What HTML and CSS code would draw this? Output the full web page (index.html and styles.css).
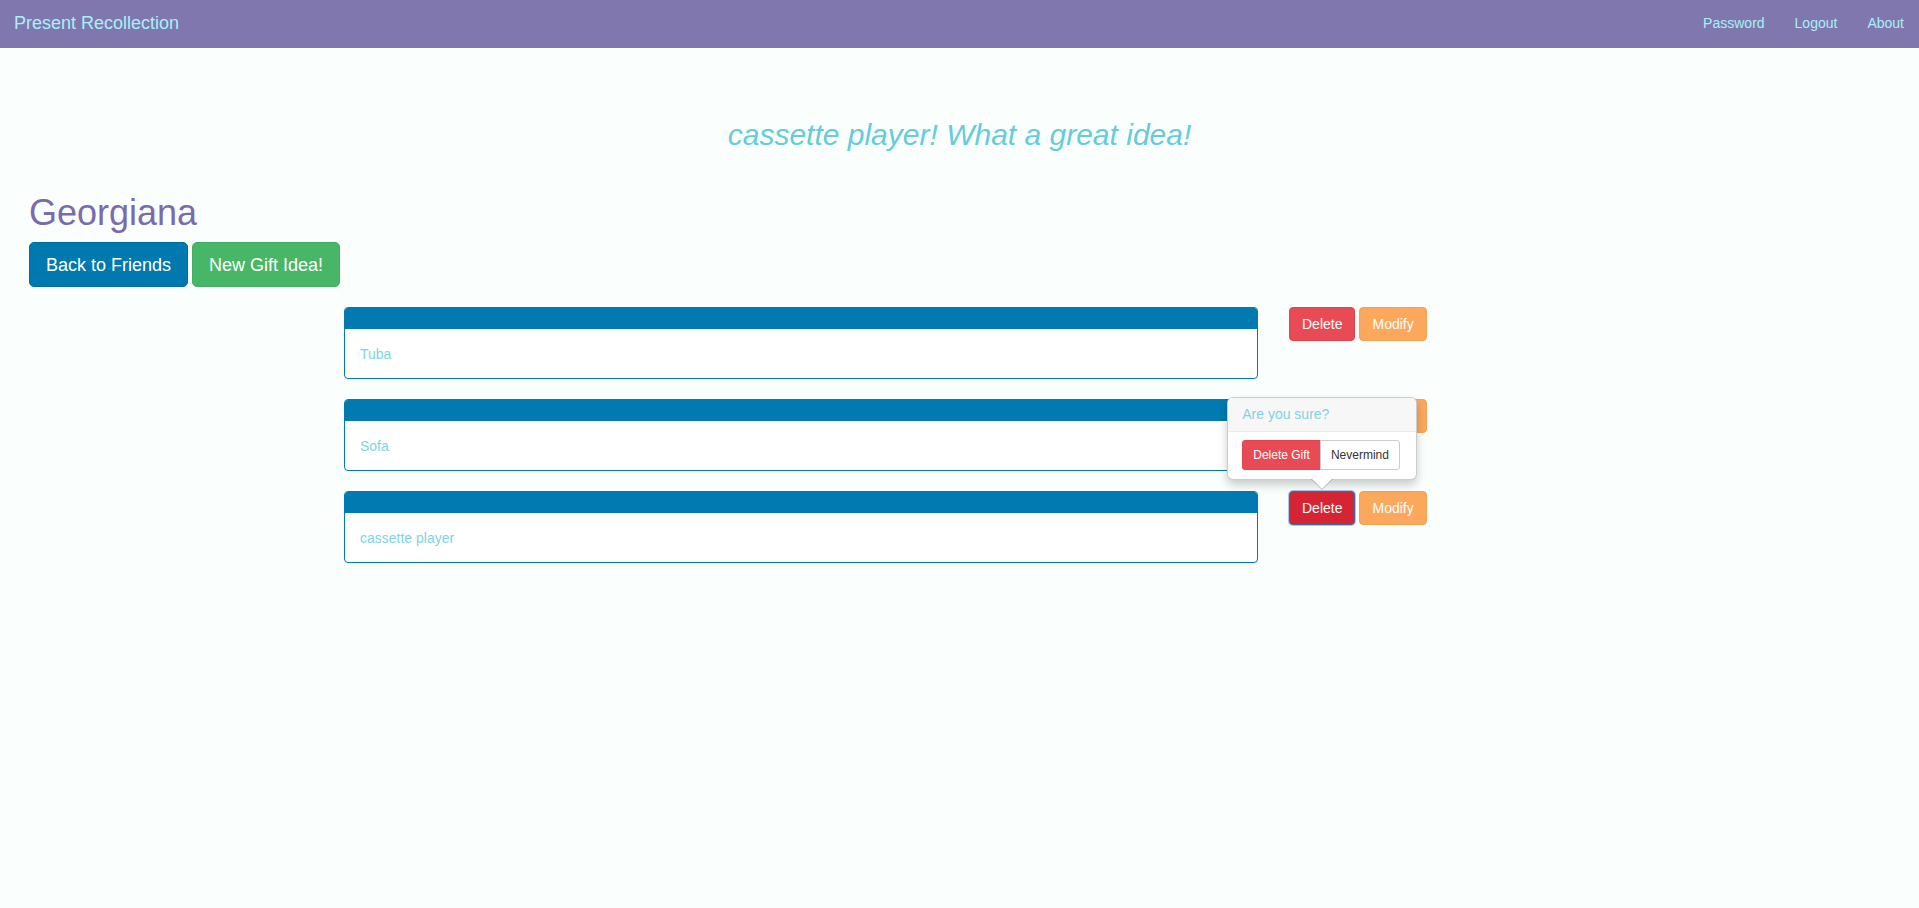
FILE: index.html
```html
<!DOCTYPE html>
<html lang="en">
<head>
<meta charset="utf-8">
<title>Present Recollection</title>
<link rel="stylesheet" href="styles.css">
</head>
<body>
<nav class="navbar">
  <a class="brand" href="#">Present Recollection</a>
  <ul class="nav-links">
    <li><a href="#">Password</a></li>
    <li><a href="#">Logout</a></li>
    <li><a href="#">About</a></li>
  </ul>
</nav>
<main class="page">
  <h2 class="idea-msg">cassette player! What a great idea!</h2>
  <h1 class="friend-name">Georgiana</h1>
  <div class="actions">
    <a class="btn-lg btn-blue" href="#">Back to Friends</a>
    <a class="btn-lg btn-green" href="#">New Gift Idea!</a>
  </div>
  <ul class="gift-list">
    <li class="gift-row">
      <div class="gift-card"><div class="gift-head"></div><div class="gift-body">Tuba</div></div>
      <div class="gift-actions">
        <span class="del-wrap"><button class="btn btn-red">Delete</button></span>
        <button class="btn btn-orange">Modify</button>
      </div>
    </li>
    <li class="gift-row">
      <div class="gift-card"><div class="gift-head"></div><div class="gift-body">Sofa</div></div>
      <div class="gift-actions">
        <span class="del-wrap"><button class="btn btn-red">Delete</button></span>
        <button class="btn btn-orange">Modify</button>
      </div>
    </li>
    <li class="gift-row">
      <div class="gift-card"><div class="gift-head"></div><div class="gift-body">cassette player</div></div>
      <div class="gift-actions">
        <span class="del-wrap">
          <button class="btn btn-red btn-active">Delete</button>
          <div class="popover">
            <div class="popover-title">Are you sure?</div>
            <div class="popover-content">
              <div class="btn-group">
                <button class="btn-sm btn-sm-red">Delete Gift</button><button class="btn-sm btn-sm-white">Nevermind</button>
              </div>
            </div>
            <span class="arrow"></span>
          </div>
        </span>
        <button class="btn btn-orange">Modify</button>
      </div>
    </li>
  </ul>
</main>
</body>
</html>
```

FILE: styles.css
```css
* { box-sizing: border-box; }
html, body { margin: 0; padding: 0; }
body {
  background: #fafffe;
  font-family: "Liberation Sans", Arial, sans-serif;
  font-size: 14px;
  line-height: 20px;
  color: #333;
}
a { text-decoration: none; }

.navbar {
  height: 48px;
  background: #8077ae;
  display: flex;
  align-items: center;
  justify-content: space-between;
  padding: 0 15px 2px 14px;
}
.brand {
  color: #a6f1f6;
  font-size: 18px;
  line-height: 20px;
}
.nav-links {
  list-style: none;
  margin: 0;
  padding: 0;
  display: flex;
}
.nav-links a {
  display: block;
  color: #a6f1f6;
  padding: 0 0 0 30px;
  font-size: 14px;
}

.page {
  padding: 0 29px;
}
.idea-msg {
  margin: 70px 0 0;
  text-align: center;
  font-style: italic;
  font-weight: normal;
  font-size: 30px;
  line-height: 33px;
  color: #66ccd8;
}
.friend-name {
  margin: 42px 0 9px;
  font-weight: normal;
  font-size: 36px;
  line-height: 40px;
  color: #7a6cac;
}
.actions {
  display: flex;
  gap: 4px;
  margin-bottom: 20px;
}
.btn-lg {
  display: inline-block;
  padding: 9.5px 16px;
  font-size: 18px;
  line-height: 24px;
  border-radius: 5px;
  border: 1px solid transparent;
  color: #fff;
}
.btn-blue { background: #0079ae; border-color: #006f9f; }
.btn-green { background: #47b767; border-color: #3fae5e; }

.gift-list {
  list-style: none;
  margin: 0 0 0 315px;
  padding: 0;
  display: flex;
  flex-direction: column;
  gap: 20px;
}
.gift-row {
  display: flex;
  align-items: flex-start;
  gap: 31px;
}
.gift-card {
  width: 914px;
  border: 1px solid #007ab0;
  border-radius: 4px;
  background: #fff;
  overflow: hidden;
}
.gift-head {
  height: 21px;
  background: #007ab0;
}
.gift-body {
  padding: 15px 15px;
  height: 49px;
  color: #7ed4df;
  font-size: 14px;
  line-height: 20px;
}
.gift-actions {
  display: flex;
  gap: 4px;
}
.del-wrap { position: relative; display: inline-block; }
.btn {
  display: inline-block;
  font-family: inherit;
  font-size: 14px;
  line-height: 20px;
  padding: 6px 12px;
  border-radius: 4px;
  border: 1px solid transparent;
  color: #fff;
  cursor: pointer;
  height: 34px;
}
.btn-red { background: #e84b55; border-color: #e2434d; }
.btn-orange { background: #fba85c; border-color: #f6a255; }
.btn-active {
  background: #d52535;
  border-color: #3d6aa0;
  box-shadow: 0 0 0 1px #9ccaf1;
}

.popover {
  position: absolute;
  bottom: calc(100% + 11px);
  left: 50%;
  margin-left: -95px;
  width: 190px;
  background: #fff;
  border: 1px solid rgba(0,0,0,0.2);
  border-radius: 6px;
  box-shadow: 0 5px 10px rgba(0,0,0,0.2);
  z-index: 10;
}
.popover-title {
  padding: 7px 14px;
  font-size: 14px;
  line-height: 19px;
  background: #f7f7f7;
  border-bottom: 1px solid #ebebeb;
  border-radius: 5px 5px 0 0;
  color: #7ed4df;
}
.popover-content {
  padding: 8px 14px 9px;
}
.btn-group { display: flex; }
.btn-sm {
  font-family: inherit;
  font-size: 12px;
  line-height: 18px;
  padding: 5px 10px;
  border: 1px solid transparent;
  height: 30px;
}
.btn-sm-red {
  background: #e84b55;
  border-color: #e2434d;
  color: #fff;
  border-radius: 3px 0 0 3px;
}
.btn-sm-white {
  background: #fff;
  border-color: #ccc;
  color: #333;
  border-radius: 0 3px 3px 0;
  margin-left: -1px;
}
.arrow,
.arrow::after {
  position: absolute;
  width: 0;
  height: 0;
  border-style: solid;
  border-color: transparent;
}
.arrow {
  left: 50%;
  margin-left: -11px;
  bottom: -11px;
  border-width: 11px 11px 0;
  border-top-color: rgba(0,0,0,0.25);
}
.arrow::after {
  content: "";
  left: -10px;
  bottom: 1px;
  border-width: 10px 10px 0;
  border-top-color: #fff;
}
```
